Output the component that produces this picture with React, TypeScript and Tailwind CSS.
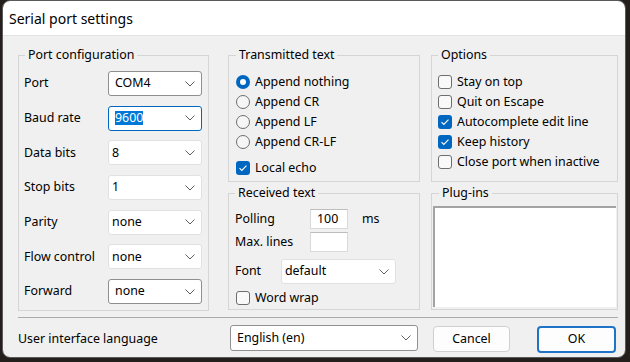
import clsx from "clsx";

type Variant = "edit" | "focus" | "list";

const PORT_ROWS: { label: string; value: string; variant: Variant }[] = [
  { label: "Port", value: "COM4", variant: "edit" },
  { label: "Baud rate", value: "9600", variant: "focus" },
  { label: "Data bits", value: "8", variant: "list" },
  { label: "Stop bits", value: "1", variant: "list" },
  { label: "Parity", value: "none", variant: "list" },
  { label: "Flow control", value: "none", variant: "list" },
  { label: "Forward", value: "none", variant: "edit" },
];

const COMBO_STYLES: Record<Variant, string> = {
  edit: "border-[#8f8f8f] pl-[6px]",
  focus: "border-[#0067c0] pl-[6px]",
  list: "border-[#e1e1e1] pl-[3px]",
};

function Chevron() {
  return (
    <svg width="10" height="6" viewBox="0 0 10 6" className="shrink-0">
      <path d="M0.5 0.5 L5 5 L9.5 0.5" fill="none" stroke="#5f5f5f" strokeWidth="1" />
    </svg>
  );
}

function Combo({ value, variant, className }: { value: string; variant: Variant; className?: string }) {
  return (
    <div
      className={clsx(
        "flex h-[25px] items-center justify-between rounded-[3px] border bg-white pr-[6px]",
        COMBO_STYLES[variant],
        className,
      )}
    >
      {variant === "focus" ? (
        <span className="bg-[#0078d7] leading-[14px] text-white">{value}</span>
      ) : (
        <span>{value}</span>
      )}
      <Chevron />
    </div>
  );
}

function Radio({ checked, label }: { checked?: boolean; label: string }) {
  return (
    <div className="flex h-[20px] items-center gap-[5px]">
      {checked ? (
        <span className="flex h-[14px] w-[14px] shrink-0 items-center justify-center rounded-full bg-[#0067c0]">
          <span className="h-[6px] w-[6px] rounded-full bg-white" />
        </span>
      ) : (
        <span className="h-[14px] w-[14px] shrink-0 rounded-full border border-[#6e6e6e] bg-[#f6f6f6]" />
      )}
      <span>{label}</span>
    </div>
  );
}

function Check({ checked, label, className }: { checked?: boolean; label: string; className?: string }) {
  return (
    <div className={clsx("flex h-[20px] items-center gap-[5px]", className)}>
      {checked ? (
        <span className="flex h-[14px] w-[14px] shrink-0 items-center justify-center rounded-[3px] bg-[#0067c0]">
          <svg width="10" height="8" viewBox="0 0 10 8">
            <path d="M1.5 4.2 L3.8 6.4 L8.5 1.6" fill="none" stroke="white" strokeWidth="1.1" />
          </svg>
        </span>
      ) : (
        <span className="h-[14px] w-[14px] shrink-0 rounded-[3px] border border-[#6e6e6e] bg-[#f9f9f9]" />
      )}
      <span>{label}</span>
    </div>
  );
}

export default function App() {
  return (
    <div className="h-[362px] w-[630px] bg-[#241f1c] pl-[2px] font-['Noto_Sans',sans-serif] text-[12.4px] text-black">
      <div className="flex h-[358px] w-[624px] flex-col overflow-hidden rounded-[8px] border border-[#5a5a5a]">
        <div className="flex h-[35px] shrink-0 items-center border-b border-[#e3e3e3] bg-white pl-[6px] text-[14px]">
          Serial port settings
        </div>

        <div className="flex-1 bg-[#f0f0f0] pt-[11px] pr-[7px] pl-[15px]">
          <div className="flex items-start">
            {/* port */}
            <fieldset className="w-[191px] border border-[#d5d5d5] pt-[8px] pr-[6px] pb-[6px] pl-[5px]">
              <legend className="ml-px px-[3px] leading-[16px]">Port configuration</legend>
              <div className="flex flex-col gap-[9.7px]">
                {PORT_ROWS.map((row) => (
                  <div key={row.label} className="flex items-center justify-between">
                    <span>{row.label}</span>
                    <Combo value={row.value} variant={row.variant} className="w-[94px]" />
                  </div>
                ))}
              </div>
            </fieldset>

            {/* text */}
            <div className="ml-[19px] flex w-[192px] flex-col gap-[3px]">
              <fieldset className="border border-[#d5d5d5] pt-[9px] pb-[3px] pl-[7px]">
                <legend className="px-[3px] leading-[16px]">Transmitted text</legend>
                <Radio checked label="Append nothing" />
                <Radio label="Append CR" />
                <Radio label="Append LF" />
                <Radio label="Append CR-LF" />
                <Check checked label="Local echo" className="mt-[6px]" />
              </fieldset>

              <fieldset className="border border-[#d5d5d5] pt-[8px] pb-px pl-[6px]">
                <legend className="px-[3px] leading-[16px]">Received text</legend>
                <div className="flex h-[20px] items-center">
                  <span className="w-[75px]">Polling</span>
                  <div className="flex h-[20px] w-[38px] items-center border border-[#d9d9d9] border-t-[#bdbdbd] bg-white pl-[6px]">
                    100
                  </div>
                  <span className="ml-[14px]">ms</span>
                </div>
                <div className="mt-[3px] flex h-[20px] items-center">
                  <span className="w-[75px]">Max. lines</span>
                  <div className="h-[20px] w-[38px] border border-[#d9d9d9] border-t-[#bdbdbd] bg-white" />
                </div>
                <div className="mt-[7px] flex items-center">
                  <span className="w-[46px]">Font</span>
                  <Combo value="default" variant="list" className="w-[115px]" />
                </div>
                <Check label="Word wrap" className="mt-[4px] ml-px" />
              </fieldset>
            </div>

            {/* options */}
            <div className="ml-[11px] flex w-[187px] flex-col gap-[3px]">
              <fieldset className="border border-[#d5d5d5] pt-[9px] pb-[9px] pl-[6px]">
                <legend className="px-[3px] leading-[16px]">Options</legend>
                <Check label="Stay on top" />
                <Check label="Quit on Escape" />
                <Check checked label="Autocomplete edit line" />
                <Check checked label="Keep history" />
                <Check label="Close port when inactive" />
              </fieldset>

              <fieldset className="border border-[#d5d5d5] pt-[5px] pr-px pb-[2px] pl-px">
                <legend className="ml-[6px] px-[3px] leading-[16px]">Plug-ins</legend>
                <div className="h-[101px] border-t-2 border-l-2 border-t-[#a3a3a3] border-l-[#a3a3a3] bg-white" />
              </fieldset>
            </div>
          </div>

          <div className="mt-[6px] border-t border-[#ababab]" />

          <div className="mt-[7px] flex items-start">
            <span className="mt-[5px] w-[212px]">User interface language</span>
            <Combo value="English (en)" variant="edit" className="h-[26px] w-[188px]" />
            <button className="mt-px ml-[15px] h-[26px] w-[77px] rounded-[4px] border border-[#d0d0d0] bg-[#fdfdfd]">
              Cancel
            </button>
            <button className="mt-px ml-[27px] h-[27px] w-[79px] rounded-[4px] border-2 border-[#1f74c9] bg-[#fdfdfd]">
              OK
            </button>
          </div>
        </div>
      </div>
    </div>
  );
}
